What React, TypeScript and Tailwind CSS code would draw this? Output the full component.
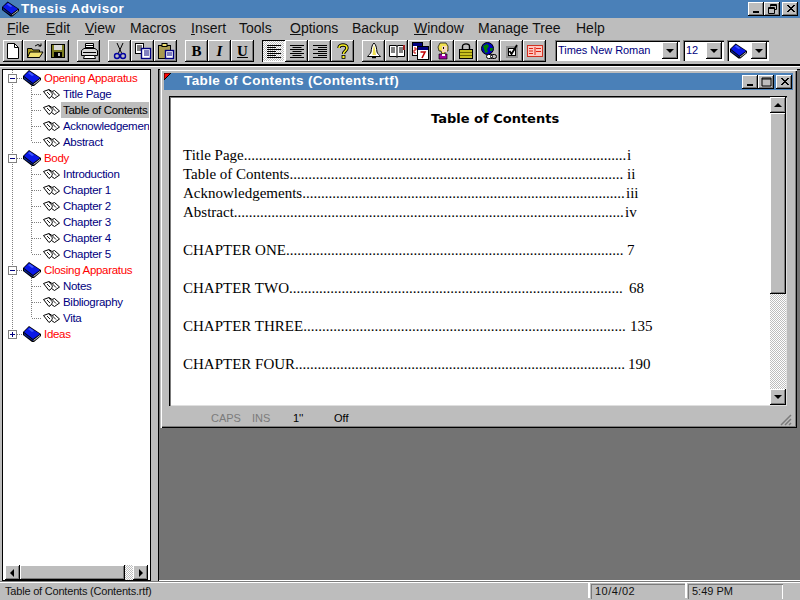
import React from "react";

const bevel = "bg-[#bdbdbd] shadow-[inset_-1px_-1px_0_#000,inset_1px_1px_0_#fff,inset_-2px_-2px_0_#7b7b7b]";
const hatch = "bg-[repeating-conic-gradient(#ffffff_0_25%,#bdbdbd_0_50%)] bg-[length:2px_2px]";

function Book({ w = 18, h = 16 }: { w?: number; h?: number }) {
  return (
    <svg width={w} height={h} viewBox="0 0 18 16" className="shrink-0">
      <path d="M6 0 L18 8 L18 10 L11 16 L9 16 L0 9 L0 6 Z" fill="#000" />
      <path d="M6 1 L17 8 L10 13 L1 6 Z" fill="#0a18e8" />
      <path d="M1 7 L10 14 L10 15 L1 9 Z" fill="#0a2090" />
      <path d="M10.5 14 L17 9 L17 10 L10.5 15 Z" fill="#d0d8e8" />
      <path d="M5 3 L7 2 L11 5 L9 6 Z" fill="#4058ff" />
    </svg>
  );
}

function OpenBook() {
  return (
    <svg width="18" height="12" viewBox="0 0 18 12" className="shrink-0">
      <path d="M1.5 3.5 L7 1.5 L10 3.5 L12.5 2.5 L17.5 7 L12.5 10.5 L9.5 8.5 L7 10.5 Z" fill="#fff" stroke="#000" />
      <path d="M7 2 L10.5 6 L9.5 8.5 M10.5 4 L14 7.5 M5 4 L8 7" stroke="#000" fill="none" strokeWidth="0.9" />
    </svg>
  );
}

function Gutter({ level, box, trunk, branchEnd }: { level: number; box?: "-" | "+"; trunk: boolean; branchEnd?: boolean }) {
  const d = "#808080";
  if (level === 0) {
    return (
      <svg width="23" height="16" viewBox="0 0 23 16" className="shrink-0">
        {trunk && <line x1="12.5" y1="12" x2="12.5" y2="16" stroke={d} strokeDasharray="1 1" />}
        <line x1="12.5" y1="0" x2="12.5" y2="4" stroke={d} strokeDasharray="1 1" />
        <line x1="17" y1="8.5" x2="23" y2="8.5" stroke={d} strokeDasharray="1 1" />
        <rect x="8.5" y="4.5" width="8" height="8" fill="#fff" stroke={d} />
        <line x1="10" y1="8.5" x2="15" y2="8.5" stroke="#000080" />
        {box === "+" && <line x1="12.5" y1="6" x2="12.5" y2="11" stroke="#000080" />}
      </svg>
    );
  }
  return (
    <svg width="42" height="16" viewBox="0 0 42 16" className="shrink-0">
      {trunk && <line x1="12.5" y1="0" x2="12.5" y2="16" stroke={d} strokeDasharray="1 1" />}
      <line x1="31.5" y1="0" x2="31.5" y2={branchEnd ? 8 : 16} stroke={d} strokeDasharray="1 1" />
      <line x1="32" y1="8.5" x2="42" y2="8.5" stroke={d} strokeDasharray="1 1" />
    </svg>
  );
}

function Tree() {
  const groups: { name: string; box: "-" | "+"; kids: string[]; last?: boolean }[] = [
    { name: "Opening Apparatus", box: "-", kids: ["Title Page", "Table of Contents", "Acknowledgements", "Abstract"] },
    { name: "Body", box: "-", kids: ["Introduction", "Chapter 1", "Chapter 2", "Chapter 3", "Chapter 4", "Chapter 5"] },
    { name: "Closing Apparatus", box: "-", kids: ["Notes", "Bibliography", "Vita"] },
    { name: "Ideas", box: "+", kids: [], last: true },
  ];
  return (
    <div className="flex flex-col text-[11.5px] tracking-[-0.3px] leading-[16px] overflow-hidden">
      {groups.map((g) => (
        <React.Fragment key={g.name}>
          <div className="flex items-center h-[16px]">
            <Gutter level={0} box={g.box} trunk={!g.last} />
            <Book />
            <span className="ml-[3px] text-[#ff0000] whitespace-nowrap">{g.name}</span>
          </div>
          {g.kids.map((k, i) => (
            <div key={k} className="flex items-center h-[16px]">
              <Gutter level={1} trunk={!g.last} branchEnd={i === g.kids.length - 1} />
              <OpenBook />
              <span className={k === "Table of Contents" ? "ml-[1px] px-[2px] bg-[#bdbdbd] text-black whitespace-nowrap w-[88px]" : "ml-[1px] px-[2px] text-[#000080] whitespace-nowrap w-[88px]"}>{k === "Acknowledgements" ? "Acknowledgemen" : k}</span>
            </div>
          ))}
        </React.Fragment>
      ))}
    </div>
  );
}

function Tri({ dir }: { dir: "u" | "d" | "l" | "r" }) {
  const p = { u: "M4 1 L0 5 L8 5 Z", d: "M0 1 L8 1 L4 5 Z", l: "M5 0 L5 8 L1 4 Z", r: "M1 0 L1 8 L5 4 Z" }[dir];
  const horiz = dir === "l" || dir === "r";
  return (
    <svg width={horiz ? 6 : 8} height={horiz ? 8 : 6} viewBox={horiz ? "0 0 6 8" : "0 0 8 6"}>
      <path d={p} fill="#000" />
    </svg>
  );
}

function SysBtn({ kind, className }: { kind: "min" | "max" | "restore" | "close"; className: string }) {
  return (
    <div className={`${bevel} ${className} h-[14px] flex items-center justify-center`}>
      <svg width="11" height="10" viewBox="0 0 11 10">
        {kind === "min" && <rect x="2" y="7" width="6" height="2" fill="#000" />}
        {kind === "max" && <path d="M1 1 H10 V9 H1 Z M1 2 H10" fill="none" stroke="#000" />}
        {kind === "restore" && <path d="M3.5 2.5 V0.5 H9.5 V5.5 H7.5 M1.5 3.5 H7.5 V9.5 H1.5 Z M1.5 4.5 H7.5 M3.5 1.5 H9.5" fill="none" stroke="#000" />}
        {kind === "close" && <path d="M2 1 L9 8 M3 1 L10 8 M9 1 L2 8 M10 1 L3 8" stroke="#000" />}
      </svg>
    </div>
  );
}

function I({ n }: { n: string }) {
  const common = { width: 18, height: 18, viewBox: "0 0 18 18" };
  switch (n) {
    case "new":
      return <svg {...common}><path d="M3.5 1.5 H10.5 L14.5 5.5 V16.5 H3.5 Z" fill="#fff" stroke="#000" /><path d="M10.5 1.5 V5.5 H14.5" fill="none" stroke="#000" /></svg>;
    case "open":
      return <svg {...common}><path d="M1.5 6.5 H6 L7 8 H13.5 V15.5 H1.5 Z" fill="#a89a20" stroke="#000" /><path d="M1.5 15.5 L4 10 H17 L13.5 15.5 Z" fill="#f0e070" stroke="#000" /><path d="M9 4 Q12 1 15 4 M15 4 L15 1.5 M15 4 L12.5 4" fill="none" stroke="#000" /></svg>;
    case "save":
      return <svg {...common}><rect x="2.5" y="2.5" width="13" height="13" fill="#7b7b20" stroke="#000" /><rect x="5" y="3" width="8" height="5" fill="#d8d8d8" /><rect x="5" y="10" width="8" height="5" fill="#000" /><rect x="9" y="11" width="2" height="3" fill="#bdbdbd" /></svg>;
    case "print":
      return <svg {...common}><path d="M5.5 1.5 H13.5 V7.5 H5.5 Z" fill="#fff" stroke="#000" /><path d="M1.5 8.5 L4 6.5 H15 L17.5 8.5 V13.5 H1.5 Z" fill="#d8d8d8" stroke="#000" /><path d="M4.5 13.5 H14.5 L15.5 16.5 H3.5 Z" fill="#fff" stroke="#000" /><path d="M3 10.5 H16 M5 3.5 H13 M5 5.5 H13" stroke="#000" /></svg>;
    case "cut":
      return <svg {...common}><path d="M6 1 L10.5 11 M12 1 L7.5 11" stroke="#000" fill="none" /><circle cx="6" cy="14" r="2.5" fill="none" stroke="#0000a0" strokeWidth="1.4" /><circle cx="12" cy="14" r="2.5" fill="none" stroke="#0000a0" strokeWidth="1.4" /></svg>;
    case "copy":
      return <svg {...common}><rect x="1.5" y="1.5" width="8" height="10" fill="#fff" stroke="#000" /><path d="M3 4 H8 M3 6 H8 M3 8 H8" stroke="#000" /><rect x="7.5" y="6.5" width="9" height="10" fill="#fff" stroke="#000080" strokeWidth="1.4" /><path d="M10 9 H15 M10 11 H15 M10 13 H15" stroke="#000080" /></svg>;
    case "paste":
      return <svg {...common}><rect x="1.5" y="3.5" width="12" height="13" fill="#a89a50" stroke="#000" /><rect x="5" y="1.5" width="5" height="3" fill="#f0e070" stroke="#000" /><rect x="8.5" y="8.5" width="8" height="8" fill="#fff" stroke="#000080" strokeWidth="1.4" /><path d="M10 11 H15 M10 13 H15" stroke="#000080" /></svg>;
    case "bell":
      return <svg {...common}><path d="M9 1 C6.5 3 6.5 7 6 10 C5.5 12 3.5 13 2.5 14.5 H15.5 C14.5 13 12.5 12 12 10 C11.5 7 11.5 3 9 1 Z" fill="#fff" stroke="#000" /><path d="M9 3 C8 6 8 10 7.5 13 H11 C10.5 10 10 6 9 3 Z" fill="#f0e050" /><path d="M7 15.5 H11" stroke="#000" strokeWidth="1.5" /></svg>;
    case "bookopen":
      return <svg {...common}><path d="M1.5 3.5 H8.5 L9 4.5 L9.5 3.5 H16.5 V14.5 H9.5 L9 15.5 L8.5 14.5 H1.5 Z" fill="#fff" stroke="#000" /><path d="M3 6 H7 M3 8 H7 M3 10 H7 M11 6 H15 M11 8 H15 M11 10 H15 M9 4 V15" stroke="#000" /><rect x="15" y="3" width="2" height="5" fill="#a02020" /></svg>;
    case "cal":
      return <svg {...common}><rect x="1.5" y="0.5" width="10" height="13" fill="#fff" stroke="#000" /><rect x="2" y="1" width="9" height="3" fill="#000080" /><rect x="6.5" y="4.5" width="11" height="13" fill="#fff" stroke="#000" /><rect x="7" y="5" width="10" height="3" fill="#000080" /><path d="M9.5 10 H14 L11 16" fill="none" stroke="#c00000" strokeWidth="1.6" /><path d="M3 6 H5 V8 H3 V11 H5" fill="none" stroke="#c00000" /></svg>;
    case "girl":
      return <svg {...common}><path d="M6 1 H12 L14 4 V9 H11 L11 12 H8 L7 9 H5 L4 5 Z" fill="#f0e050" stroke="#000" strokeWidth="0.7" /><rect x="8" y="4" width="5" height="6" fill="#f8d8c0" /><rect x="9" y="5" width="1" height="2" fill="#000" /><path d="M5 12 H13 V17 H5 Z" fill="#a000a0" stroke="#000" strokeWidth="0.7" /><rect x="8" y="12" width="3" height="2" fill="#fff" /></svg>;
    case "lock":
      return <svg {...common}><path d="M5.5 8 V4.5 C5.5 1 12.5 1 12.5 4.5 V8" fill="none" stroke="#000" strokeWidth="1.4" /><rect x="2.5" y="7.5" width="13" height="9" fill="#c8c020" stroke="#000" /><path d="M3 10.5 H15 M3 13.5 H15" stroke="#706800" /></svg>;
    case "globe":
      return <svg {...common}><circle cx="7.5" cy="6.5" r="6" fill="#0000c0" stroke="#000" /><path d="M3 4 L7 2 L9 4 L7 7 L8 10 L5 11 L4 7 Z M10 6 L13 6 L12 9 L10 9 Z" fill="#008000" /><rect x="6.5" y="12.5" width="6" height="4" rx="2" fill="#fff" stroke="#000" /><rect x="10.5" y="12.5" width="6" height="4" rx="2" fill="none" stroke="#000" /></svg>;
    case "check":
      return <svg {...common}><rect x="3" y="4" width="12" height="12" fill="#909090" /><rect x="5.5" y="6.5" width="7" height="7" fill="#fff" stroke="#000" /><path d="M6.5 9 L8.5 12 L14 3" fill="none" stroke="#000" strokeWidth="1.8" /></svg>;
    case "form":
      return <svg {...common}><rect x="1.5" y="3.5" width="15" height="11" fill="#ffc8c0" stroke="#d03020" /><path d="M3 6.5 H7 M3 9 H7 M3 11.5 H7 M9 5 V13 M10 6.5 H15 M10 9.5 H15" stroke="#e02010" /></svg>;
    case "q":
      return <svg {...common}><path d="M5 6 C5 2 13 2 13 6 C13 9 9.5 9 9.5 12" fill="none" stroke="#000" strokeWidth="3.4" /><path d="M5 6 C5 2 13 2 13 6 C13 9 9.5 9 9.5 12" fill="none" stroke="#f8f020" strokeWidth="1.6" /><rect x="8" y="13.5" width="3" height="3" fill="#f8f020" stroke="#000" strokeWidth="0.8" /></svg>;
    case "al":
    case "ac":
    case "ar": {
      const ys = [3, 5, 7, 9, 11, 13, 15];
      return (
        <svg {...common}>
          {ys.map((y, i) => {
            const short = i % 2 === 1;
            const len = short ? 9 : 14;
            const x = n === "al" ? 2 : n === "ac" ? 9 - len / 2 : 16 - len;
            return <rect key={y} x={x} y={y} width={len} height="1" fill="#000" />;
          })}
        </svg>
      );
    }
  }
  return null;
}

function Btn({ children, pressed, first }: { children: React.ReactNode; pressed?: boolean; first?: boolean }) {
  return (
    <div className={pressed
      ? `w-[23px] h-[22px] flex items-center justify-center shadow-[inset_1px_1px_0_#000,inset_-1px_-1px_0_#fff] ${hatch}`
      : first
      ? `w-[20px] ml-[3px] h-[22px] flex items-center justify-center ${bevel}`
      : `w-[23px] h-[22px] flex items-center justify-center ${bevel}`}>
      {children}
    </div>
  );
}

function Letter({ c, cls }: { c: string; cls: string }) {
  return <span className={`font-['Liberation_Serif',serif] font-bold text-[15px] leading-none text-black ${cls}`}>{c}</span>;
}

function Combo({ w, children }: { w: string; children: React.ReactNode }) {
  return (
    <div className={`${w} h-[21px] bg-white flex items-center justify-between pl-[3px] pr-[2px] shadow-[inset_1px_1px_0_#7b7b7b,inset_2px_2px_0_#000,inset_-1px_-1px_0_#fff]`}>
      <div className="flex items-center text-[11px] tracking-[-0.05px] text-[#000080] whitespace-nowrap">{children}</div>
      <div className={`w-[16px] h-[17px] flex items-center justify-center ${bevel}`}><Tri dir="d" /></div>
    </div>
  );
}

const rows: { t: string; w: number; p: string; n: number; gap?: boolean }[] = [
  { t: "Title Page", w: 444, p: "i", n: 102 },
  { t: "Table of Contents", w: 444, p: "ii", n: 89 },
  { t: "Acknowledgements", w: 443, p: "iii", n: 86 },
  { t: "Abstract", w: 442, p: "iv", n: 104 },
  { t: "CHAPTER ONE", w: 444, p: "7", n: 90, gap: true },
  { t: "CHAPTER TWO", w: 446, p: "68", n: 89, gap: true },
  { t: "CHAPTER THREE", w: 447, p: "135", n: 86, gap: true },
  { t: "CHAPTER FOUR", w: 445, p: "190", n: 88, gap: true },
];

export default function App() {
  return (
    <div className="w-[800px] h-[600px] overflow-hidden flex flex-col bg-[#bdbdbd] font-['Liberation_Sans',Arial,sans-serif] text-black">
      {/* title bar */}
      <div className="h-[18px] bg-[#4a80b8] flex items-center pl-[2px] pr-[2px] shrink-0">
        <Book w={17} h={16} />
        <span className="ml-[2px] text-white font-bold text-[13.5px] tracking-[0.5px]">Thesis Advisor</span>
        <div className="ml-auto flex">
          <SysBtn kind="min" className="w-[16px]" />
          <SysBtn kind="restore" className="w-[16px]" />
          <SysBtn kind="close" className="w-[16px] ml-[2px]" />
        </div>
      </div>
      {/* menu */}
      <div className="h-[20px] flex items-center pl-[7px] text-[14px] text-[#111] shrink-0">
        {[["F", "ile", 39], ["E", "dit", 39], ["V", "iew", 45], ["", "Macros", 61], ["I", "nsert", 48], ["", "Tools", 51], ["O", "ptions", 62], ["", "Backup", 62], ["W", "indow", 64], ["", "Manage Tree", 98], ["", "Help", 40]].map(([u, r, w]) => (
          <span key={String(r)} style={{ width: Number(w) }} className="whitespace-nowrap">
            {u && <span className="underline">{u}</span>}{r}
          </span>
        ))}
      </div>
      {/* toolbar */}
      <div className="h-[26px] flex items-start shrink-0 pt-[2px]">
        <div className="flex"><Btn first><I n="new" /></Btn><Btn><I n="open" /></Btn><Btn><I n="save" /></Btn></div>
        <div className="flex ml-[8px]"><Btn><I n="print" /></Btn></div>
        <div className="flex ml-[8px]"><Btn><I n="cut" /></Btn><Btn><I n="copy" /></Btn><Btn><I n="paste" /></Btn></div>
        <div className="flex ml-[8px]">
          <Btn><Letter c="B" cls="" /></Btn>
          <Btn><Letter c="I" cls="italic" /></Btn>
          <Btn><Letter c="U" cls="underline" /></Btn>
        </div>
        <div className="flex ml-[8px]">
          <Btn pressed><I n="al" /></Btn><Btn><I n="ac" /></Btn><Btn><I n="ar" /></Btn><Btn><I n="q" /></Btn>
        </div>
        <div className="flex ml-[8px]">
          {["bell", "bookopen", "cal", "girl", "lock", "globe", "check", "form"].map((n) => <Btn key={n}><I n={n} /></Btn>)}
        </div>
        <div className="flex ml-[9px] gap-[3px]">
          <Combo w="w-[125px]"><span>Times New Roman</span></Combo>
          <Combo w="w-[41px]"><span>12</span></Combo>
          <Combo w="w-[42px]"><Book w={17} h={16} /></Combo>
        </div>
      </div>
      {/* main */}
      <div className="flex-1 min-h-0 flex flex-col border-t-2 border-t-[#000] shadow-[inset_0_1px_0_#fff]">
        <div className="flex-1 min-h-0 flex pt-[3px]">
          {/* tree pane */}
          <div className="w-[149px] ml-[2px] flex flex-col bg-white shadow-[inset_1px_1px_0_#000,inset_-1px_-1px_0_#000] px-[2px] pt-[1px] pb-[1px] shrink-0">
            <div className="flex-1 min-h-0 -ml-[4px]"><Tree /></div>
            <div className="h-[15px] flex shrink-0 bg-[#bdbdbd] ml-[1px] mr-[1px]">
              <div className={`w-[15px] flex items-center justify-center ${bevel}`}><Tri dir="l" /></div>
              <div className={`w-[106px] ${bevel}`} />
              <div className={`w-[8px] ${hatch}`} />
              <div className={`w-[15px] flex items-center justify-center ${bevel}`}><Tri dir="r" /></div>
            </div>
          </div>
          {/* MDI */}
          <div className="flex-1 min-w-0 ml-[7px] bg-[#737373] shadow-[inset_1px_1px_0_#000,inset_0_-1px_0_#fff] pl-[2px] pr-[3px]">
            {/* child window */}
            <div className="h-[359px] bg-[#bdbdbd] shadow-[inset_1px_1px_0_#bdbdbd,inset_2px_2px_0_#fff,inset_-1px_-1px_0_#000,inset_-2px_-2px_0_#7b7b7b] p-[4px] flex flex-col">
              <div className="h-[17px] bg-[#4a80b8] flex items-center pr-[1px] shrink-0 relative">
                <svg width="8" height="8" viewBox="0 0 8 8" className="absolute left-0 top-0">
                  <path d="M0 0 H7 L0 7 Z" fill="#ff0000" stroke="#000" strokeWidth="1" />
                </svg>
                <span className="ml-[20px] text-white font-bold text-[13.5px] tracking-[0.4px] whitespace-nowrap">Table of Contents (Contents.rtf)</span>
                <div className="ml-auto flex">
                  <SysBtn kind="min" className="w-[16px]" />
                  <SysBtn kind="max" className="w-[16px]" />
                  <SysBtn kind="close" className="w-[16px] ml-[2px]" />
                </div>
              </div>
              {/* document */}
              <div className="h-[310px] mt-[6px] ml-[5px] mr-[6px] bg-white flex shadow-[inset_1px_1px_0_#000,inset_2px_2px_0_#7b7b7b,inset_-1px_-1px_0_#dfdfdf] shrink-0">
                <div className="flex-1 min-w-0 pl-[14px] pt-[14px]">
                  <div className="pl-[248px] font-['DejaVu_Sans',sans-serif] font-bold text-[13px] leading-[18px] text-black whitespace-nowrap">Table of Contents</div>
                  <div className="mt-[18px] font-['Liberation_Serif',serif] text-[15px] leading-[19px]">
                    {rows.map((r) => (
                      <div key={r.t} className={r.gap ? "flex mt-[19px]" : "flex"}>
                        <span className="whitespace-nowrap block" style={{ width: r.w }}>{r.t}{".".repeat(r.n)}</span>
                        <span>{r.p}</span>
                      </div>
                    ))}
                  </div>
                </div>
                <div className="w-[16px] mr-[1px] my-[1px] flex flex-col shrink-0">
                  <div className={`h-[16px] flex items-center justify-center ${bevel}`}><Tri dir="u" /></div>
                  <div className={`h-[181px] ${bevel}`} />
                  <div className={`flex-1 ${hatch}`} />
                  <div className={`h-[16px] flex items-center justify-center ${bevel}`}><Tri dir="d" /></div>
                </div>
              </div>
              {/* child status */}
              <div className="flex-1 relative flex items-center text-[11px] pl-[47px] pt-[4px]">
                <span className="w-[41px] text-[#7b7b7b]">CAPS</span>
                <span className="w-[41px] text-[#7b7b7b]">INS</span>
                <span className="w-[41px] text-black">1''</span>
                <span className="text-black">Off</span>
                <svg width="12" height="12" viewBox="0 0 12 12" className="absolute right-[1px] bottom-[1px]">
                  <path d="M11 1 L1 11 M11 5 L5 11 M11 9 L9 11" stroke="#7b7b7b" strokeWidth="1.5" />
                </svg>
              </div>
            </div>
          </div>
        </div>
        {/* status bar */}
        <div className="h-[19px] shrink-0 flex items-center text-[11px] text-[#111] shadow-[inset_0_1px_0_#7b7b7b,inset_0_2px_0_#fff]">
          <div className="w-[588px] pl-[5px] pt-[2px] tracking-[-0.2px] whitespace-nowrap">Table of Contents (Contents.rtf)</div>
          <div className="w-[2px] h-[15px] bg-white" />
          <div className="w-[94px] ml-[1px] h-[15px] mt-[2px] pl-[4px] tracking-[0.5px] leading-[15px] shadow-[inset_1px_1px_0_#7b7b7b]">10/4/02</div>
          <div className="w-[2px] h-[15px] bg-white" />
          <div className="w-[95px] ml-[1px] h-[15px] mt-[2px] pl-[4px] leading-[15px] shadow-[inset_1px_1px_0_#7b7b7b,inset_-1px_0_0_#fff]">5:49 PM</div>
        </div>
      </div>
    </div>
  );
}
